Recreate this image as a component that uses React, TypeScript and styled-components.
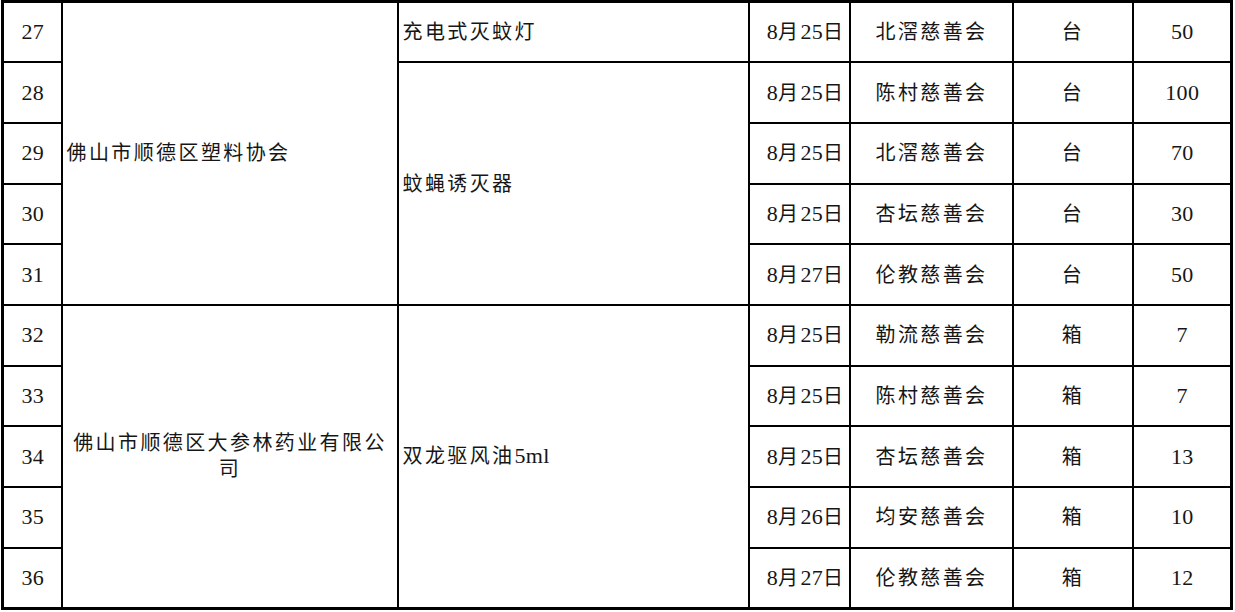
import React from "react";
import styled, { createGlobalStyle } from "styled-components";

const Global = createGlobalStyle`
  html, body { margin: 0; padding: 0; background: #fff; }
  body { font-family: "Liberation Serif", "Noto Sans CJK SC", serif; }
`;

const Sheet = styled.table`
  border-collapse: collapse;
  table-layout: fixed;
  width: 1231px;
  margin: 0 0 0 1px;
  border: 3px solid #000;
  font-family: "Liberation Serif", "Noto Sans CJK SC", serif;
  font-size: 20px;
  letter-spacing: 2.4px;
  color: #161616;
`;

const Row = styled.tr`
  height: 60.7px;
`;

const Cell = styled.td<{ $align?: "left" | "center" | "right" }>`
  border: 2px solid #000;
  padding: 0 3px 0 4px;
  text-align: ${(p) => p.$align ?? "center"};
  vertical-align: middle;
  line-height: 26px;
  overflow: hidden;
`;

const Num = styled.span`
  font-family: "Liberation Serif", serif;
  font-size: 22px;
  letter-spacing: 0.3px;
`;

function Text({ value }: { value: string }) {
  const parts = value.match(/[\x00-\x7f]+|[^\x00-\x7f]+/g) ?? [];
  return (
    <>
      {parts.map((p, i) =>
        /^[\x00-\x7f]+$/.test(p) ? <Num key={i}>{p}</Num> : <React.Fragment key={i}>{p}</React.Fragment>
      )}
    </>
  );
}

type Item = { no: number; date: string; org: string; unit: string; qty: string };

const items: Item[] = [
  { no: 27, date: "8月25日", org: "北滘慈善会", unit: "台", qty: "50" },
  { no: 28, date: "8月25日", org: "陈村慈善会", unit: "台", qty: "100" },
  { no: 29, date: "8月25日", org: "北滘慈善会", unit: "台", qty: "70" },
  { no: 30, date: "8月25日", org: "杏坛慈善会", unit: "台", qty: "30" },
  { no: 31, date: "8月27日", org: "伦教慈善会", unit: "台", qty: "50" },
  { no: 32, date: "8月25日", org: "勒流慈善会", unit: "箱", qty: "7" },
  { no: 33, date: "8月25日", org: "陈村慈善会", unit: "箱", qty: "7" },
  { no: 34, date: "8月25日", org: "杏坛慈善会", unit: "箱", qty: "13" },
  { no: 35, date: "8月26日", org: "均安慈善会", unit: "箱", qty: "10" },
  { no: 36, date: "8月27日", org: "伦教慈善会", unit: "箱", qty: "12" },
];

const donors: Record<number, { text: string; span: number; align: "left" | "center" }> = {
  0: { text: "佛山市顺德区塑料协会", span: 5, align: "left" },
  5: { text: "佛山市顺德区大参林药业有限公司", span: 5, align: "center" },
};

const goods: Record<number, { text: string; span: number }> = {
  0: { text: "充电式灭蚊灯", span: 1 },
  1: { text: "蚊蝇诱灭器", span: 4 },
  5: { text: "双龙驱风油5ml", span: 5 },
};

const widths = [59, 336, 351, 101, 163, 120, 99];

export default function App() {
  return (
    <>
      <Global />
      <Sheet>
        <colgroup>
          {widths.map((w, i) => (
            <col key={i} style={{ width: w }} />
          ))}
        </colgroup>
        <tbody>
          {items.map((it, i) => (
            <Row key={it.no}>
              <Cell>
                <Num>{it.no}</Num>
              </Cell>
              {donors[i] && (
                <Cell rowSpan={donors[i].span} $align={donors[i].align}>
                  {donors[i].text}
                </Cell>
              )}
              {goods[i] && (
                <Cell rowSpan={goods[i].span} $align="left">
                  <Text value={goods[i].text} />
                </Cell>
              )}
              <Cell $align="right">
                <Text value={it.date} />
              </Cell>
              <Cell>{it.org}</Cell>
              <Cell>{it.unit}</Cell>
              <Cell>
                <Num>{it.qty}</Num>
              </Cell>
            </Row>
          ))}
        </tbody>
      </Sheet>
    </>
  );
}
